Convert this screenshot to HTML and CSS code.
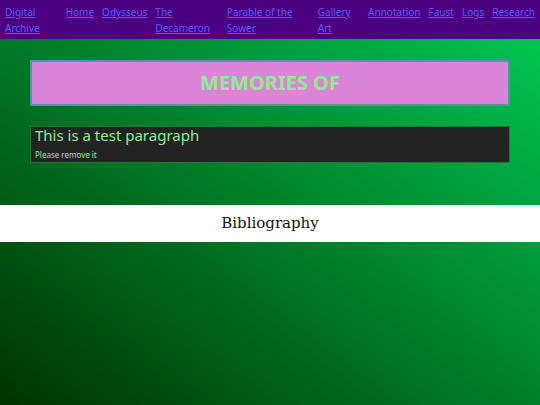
FILE: index.html
```html
<!DOCTYPE html>
<html>
<head>
<meta charset="utf-8">
<link rel="stylesheet" href="styles.css">
</head>
<body>
<nav class="topnav">
  <a href="#">Digital Archive</a>
  <a href="#">Home</a>
  <a href="#">Odysseus</a>
  <a href="#">The Decameron</a>
  <a href="#">Parable of the Sower</a>
  <a href="#">Gallery Art</a>
  <a href="#">Annotation</a>
  <a href="#">Faust</a>
  <a href="#">Logs</a>
  <a href="#">Research</a>
</nav>
<main class="content">
  <h1 class="title">MEMORIES OF</h1>
  <section class="para-box">
    <p class="para-lead">This is a test paragraph</p>
    <p class="para-small">Please remove it</p>
  </section>
</main>
<div class="biblio">Bibliography</div>
</body>
</html>
```

FILE: styles.css
```css
html {
  min-height: 100%;
  background: linear-gradient(to top right, #003300, #00cc55);
}
body {
  margin: 0;
  font-family: "Noto Sans", "Open Sans", sans-serif;
}
.topnav {
  display: flex;
  gap: 8px;
  background: #4b0082;
  padding: 4px 5px 3px 5px;
  font-size: 10px;
  line-height: 16px;
}
.topnav a {
  color: #5a5aff;
  text-decoration: underline;
}
.topnav a:first-child {
  flex-shrink: 1.5;
}
.content {
  padding: 21px 30px 42px 30px;
}
.title {
  margin: 0;
  background: #dc84da;
  border: 2px solid #4f9a98;
  color: #90ee90;
  text-align: center;
  font-size: 20px;
  font-weight: 700;
  line-height: 42px;
}
.para-box {
  margin-top: 20px;
  background: #222222;
  border: 1px solid #1c7a36;
  padding: 0 4px 1px 4px;
  color: #90ee90;
}
.para-lead {
  margin: 0;
  font-size: 15px;
  line-height: 14px;
  padding-top: 1px;
}
.para-small {
  margin: 7px 0 0 0;
  font-size: 8px;
  line-height: 12px;
}
.biblio {
  background: #ffffff;
  text-align: center;
  font-family: "DejaVu Serif", serif;
  font-size: 15px;
  line-height: 37px;
  color: #111111;
}
```
